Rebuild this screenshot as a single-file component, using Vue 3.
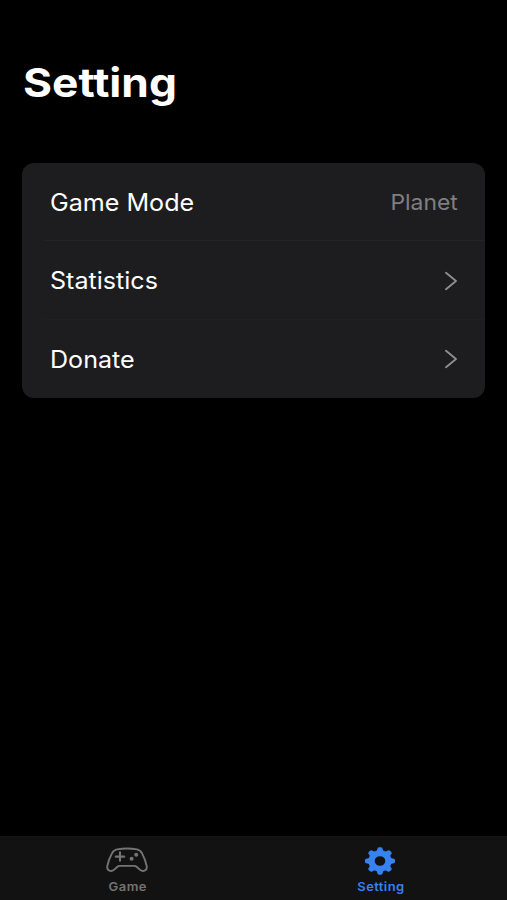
<template>
  <div class="screen">
    <main class="content">
      <h1 class="title">Setting</h1>
      <ul class="card">
        <li v-for="row in rows" :key="row.label" class="row">
          <span class="label">{{ row.label }}</span>
          <span v-if="row.value" class="value">{{ row.value }}</span>
          <svg v-else class="chevron" width="14" height="20" viewBox="0 0 14 20">
            <path d="M2 1.8 L12 10 L2 18.2" />
          </svg>
        </li>
      </ul>
    </main>

    <nav class="tab-bar">
      <button
        class="tab"
        :class="{ active: activeTab === 'game' }"
        @click="activeTab = 'game'"
      >
        <svg class="icon" width="42" height="30" viewBox="0 0 42 30">
          <path
            class="outline"
            d="M11 3.4 Q21 1.6 31 3.4 Q34.8 4.2 36.2 7.6 Q39.6 14.2 40.7 20.2 C41.4 25 36.8 26.2 33.8 23.6 L30.6 20.8 Q29.8 19.9 28.2 19.9 H13.8 Q12.2 19.9 11.4 20.8 L8.2 23.6 C5.2 26.2 0.6 25 1.3 20.2 Q2.4 14.2 5.8 7.6 Q7.2 4.2 11 3.4 Z"
          />
          <path class="pad" d="M14 6.4 V14.8 M9.8 10.6 H18.2" />
          <circle class="dot" cx="25.6" cy="12.8" r="2" />
          <circle class="dot" cx="30.2" cy="8.8" r="2" />
        </svg>
        <span class="tab-label">Game</span>
      </button>
      <button
        class="tab"
        :class="{ active: activeTab === 'setting' }"
        @click="activeTab = 'setting'"
      >
        <svg class="icon" width="32" height="30" viewBox="-16 -15 32 30">
          <g transform="scale(1.06 0.97)">
            <circle class="ring" r="8" />
            <path
              v-for="n in 8"
              :key="n"
              class="tooth"
              d="M-3.6 -9.8 Q-2.7 -10.8 -2.6 -12.2 Q-2.4 -14.2 -0.9 -14.2 H0.9 Q2.4 -14.2 2.6 -12.2 Q2.7 -10.8 3.6 -9.8 Z"
              :transform="`rotate(${n * 45})`"
            />
          </g>
        </svg>
        <span class="tab-label">Setting</span>
      </button>
    </nav>
  </div>
</template>

<script setup>
import { ref } from "vue";

const activeTab = ref("setting");

const rows = [
  { label: "Game Mode", value: "Planet" },
  { label: "Statistics" },
  { label: "Donate" },
];
</script>

<style>
body {
  margin: 0;
  background: #000;
}
</style>

<style scoped>
.screen {
  display: flex;
  flex-direction: column;
  height: 100vh;
  background: #000;
  color: #fff;
  font-family: Inter, "Liberation Sans", sans-serif;
}

.content {
  flex: 1;
  padding: 58px 22px 0;
}

/* text is drawn slightly wide, like the rest of the screen */
.title {
  width: fit-content;
  margin: 0 0 55px;
  padding-left: 1px;
  font-size: 40px;
  line-height: 50px;
  font-weight: 700;
  transform: scaleX(1.107);
  transform-origin: left center;
}

.card {
  margin: 0;
  padding: 0;
  list-style: none;
  background: #1d1d1f;
  border-radius: 12px;
}

.row {
  position: relative;
  display: flex;
  align-items: center;
  justify-content: space-between;
  box-sizing: border-box;
  height: 78.4px;
  padding: 0 27px 0 28px;
}

.row + .row::before {
  content: "";
  position: absolute;
  top: -1px;
  left: 22px;
  right: 0;
  height: 1px;
  background: #242426;
}

.row:last-child::before {
  background: #202022;
}

.label {
  font-size: 24px;
  transform: scaleX(1.045);
  transform-origin: left center;
}

.row:last-child .label {
  padding-top: 1px;
}

.value {
  color: #7f7f82;
  font-size: 22px;
  transform: scaleX(1.04);
  transform-origin: right center;
}

.chevron {
  fill: none;
  stroke: #8e8e90;
  stroke-width: 1.9;
  stroke-linecap: round;
  stroke-linejoin: round;
}

.tab-bar {
  display: flex;
  height: 64px;
  background: #121212;
}

.tab {
  flex: 1;
  display: flex;
  flex-direction: column;
  align-items: center;
  padding: 10px 0 0;
  border: 0;
  background: none;
  color: #747474;
  font-family: inherit;
}

.tab.active {
  color: #3682f0;
}

.icon {
  display: block;
}

.outline,
.pad,
.ring {
  fill: none;
  stroke: currentColor;
  stroke-linecap: round;
}

.outline {
  stroke-width: 1.9;
}

.pad {
  stroke-width: 2.1;
}

.ring {
  stroke-width: 6;
}

.dot,
.tooth {
  fill: currentColor;
}

.tab-label {
  margin-top: 3px;
  padding-left: 1px;
  font-size: 12px;
  line-height: 16px;
  font-weight: 600;
  letter-spacing: 0.4px;
  transform: scaleX(1.08);
}
</style>
